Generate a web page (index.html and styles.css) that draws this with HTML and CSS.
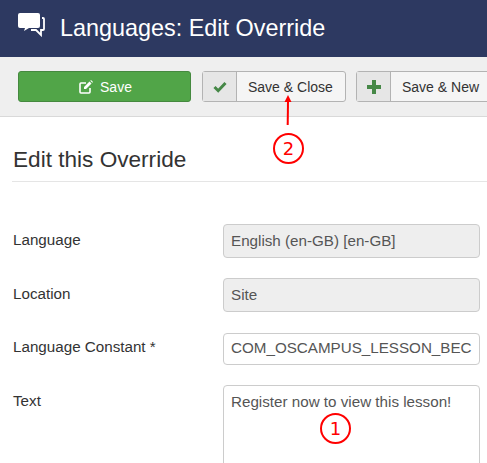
FILE: index.html
```html
<!DOCTYPE html>
<html lang="en">
<head>
  <meta charset="UTF-8">
  <title>Languages: Edit Override</title>
  <link rel="stylesheet" href="styles.css">
</head>
<body>

  <div id="page">
    <div class="page-header">
      <svg class="header-icon" viewBox="0 0 27 24" width="27" height="24">
        <path fill="#fff" d="M2 0h18a2 2 0 0 1 2 2v11a2 2 0 0 1-2 2H11l-5 3 1-3H2a2 2 0 0 1-2-2V2a2 2 0 0 1 2-2z"/>
        <path fill="none" stroke="#fff" stroke-width="1.800" d="M24 5h1a1 1 0 0 1 1 1v10a1 1 0 0 1-1 1h-2v5l-5-5h-5"/>
      </svg>
      <h1>Languages: Edit Override</h1>
    </div>

    <div class="toolbar">
      <button class="btn btn-save">
        <svg viewBox="0 0 14 14" width="14" height="14">
          <path fill="none" stroke="#fff" stroke-width="1.600" d="M11 8v4a1 1 0 0 1-1 1H2a1 1 0 0 1-1-1V4a1 1 0 0 1 1-1h5"/>
          <path fill="#fff" d="M5 7l5.500-5.500 2 2L7 9H5zM11.300 0.700l0.700-0.700 2 2-0.700 0.700z"/>
        </svg>
        Save
      </button>
      <button class="btn btn-split btn-close">
        <span class="btn-icon">
          <svg viewBox="0 0 14 12" width="14" height="12">
            <path fill="none" stroke="#468847" stroke-width="3" d="M1.500 6l3.700 3.700 7.300-7.700"/>
          </svg>
        </span>
        <span class="btn-label">Save &amp; Close</span>
      </button>
      <button class="btn btn-split btn-new">
        <span class="btn-icon">
          <svg viewBox="0 0 14 14" width="14" height="14">
            <path fill="#468847" d="M5 0h4v5h5v4H9v5H5V9H0V5h5z"/>
          </svg>
        </span>
        <span class="btn-label">Save &amp; New</span>
      </button>
    </div>

    <div class="content">
      <h2>Edit this Override</h2>
      <div class="form-row row-language">
        <label>Language</label>
        <div class="field field-disabled">English (en-GB) [en-GB]</div>
      </div>
      <div class="form-row row-location">
        <label>Location</label>
        <div class="field field-disabled">Site</div>
      </div>
      <div class="form-row row-constant">
        <label>Language Constant *</label>
        <div class="field field-short">COM_OSCAMPUS_LESSON_BEC</div>
      </div>
      <div class="form-row row-text">
        <label>Text</label>
        <div class="field field-text">Register now to view this lesson!</div>
      </div>
    </div>

    <!-- red annotations on top of the screenshot -->
    <svg class="arrow" viewBox="0 0 10 30" width="10" height="30">
      <path fill="none" stroke="#f00" stroke-width="2" d="M4.700 30L5 6"/>
      <path fill="#f00" d="M5 0l3.500 7h-7z"/>
    </svg>
    <div class="callout callout-two">2</div>
    <div class="callout callout-one">1</div>
  </div>

</body>
</html>
```

FILE: styles.css
```css
* {
  margin: 0;
  padding: 0;
  box-sizing: border-box;
  font-family: 'Liberation Sans', Arial, sans-serif;
}

html, body {
  height: 100%;
  overflow: hidden;
  background: #fff;
}

#page {
  position: relative;
  width: 487px;
  height: 463px;
  overflow: hidden;
}

.page-header {
  display: flex;
  align-items: center;
  height: 57px;
  padding-left: 18px;
  background: #2d3961;
}

.header-icon {
  margin-top: -8px;
  margin-right: 15px;
}

.page-header h1 {
  font-size: 23.400px;
  font-weight: normal;
  color: #fff;
  white-space: nowrap;
}

.toolbar {
  display: flex;
  align-items: flex-start;
  gap: 10px;
  height: 60px;
  padding: 14px 0 0 18px;
  background: #efefef;
  border-bottom: 1px solid #d9d9d9;
}

.btn {
  display: flex;
  align-items: center;
  flex-shrink: 0;
  height: 31px;
  font-size: 14px;
  color: #333;
  border-radius: 3px;
  border: 1px solid #b3b3b3;
  background: #f5f5f5;
  white-space: nowrap;
}

.btn-save {
  justify-content: center;
  gap: 7px;
  width: 173px;
  margin-right: 1px;
  padding-left: 2px;
  color: #fff;
  background: #51a548;
  border-color: #45893f;
}

.btn-icon {
  display: flex;
  align-items: center;
  justify-content: center;
  width: 34px;
  height: 100%;
  background: #e6e6e6;
  border-right: 1px solid #b3b3b3;
}

.btn-label {
  padding: 0 11px;
}

.btn-close {
  width: 144px;
}

.btn-new {
  width: 144px;
}

.content {
  padding: 0 0 0 12px;
}

.content h2 {
  height: 65px;
  padding: 30px 0 0 1px;
  font-size: 22.600px;
  line-height: 26px;
  font-weight: normal;
  color: #333;
  border-bottom: 1px solid #e5e5e5;
}

.form-row {
  display: flex;
  align-items: flex-start;
}

.form-row label {
  width: 211px;
  padding: 6px 0 0 1px;
  font-size: 15.200px;
  line-height: 20px;
  color: #333;
}

.field {
  width: 257px;
  padding: 6px 7px;
  font-size: 15.200px;
  line-height: 20px;
  color: #555;
  background: #fff;
  border: 1px solid #ccc;
  border-radius: 4px;
  white-space: nowrap;
}

.field-disabled {
  height: 34px;
  background: #eee;
}

.field-short {
  height: 32px;
  padding-top: 4px;
  padding-bottom: 4px;
}

.field-text {
  height: 110px;
}

.row-language {
  margin-top: 42px;
}

.row-location {
  margin-top: 20px;
}

.row-constant {
  margin-top: 21px;
}

.row-constant label {
  padding-top: 4px;
}

.row-text {
  margin-top: 20px;
}

.arrow {
  position: absolute;
  left: 283px;
  top: 95px;
}

.callout {
  position: absolute;
  display: flex;
  align-items: center;
  justify-content: center;
  width: 31px;
  height: 31px;
  font-family: 'DejaVu Sans', sans-serif;
  font-size: 18px;
  color: #f00;
  border: 2px solid #f00;
  border-radius: 50%;
}

.callout-two {
  left: 273px;
  top: 133px;
}

.callout-one {
  left: 320px;
  top: 413px;
}
```
